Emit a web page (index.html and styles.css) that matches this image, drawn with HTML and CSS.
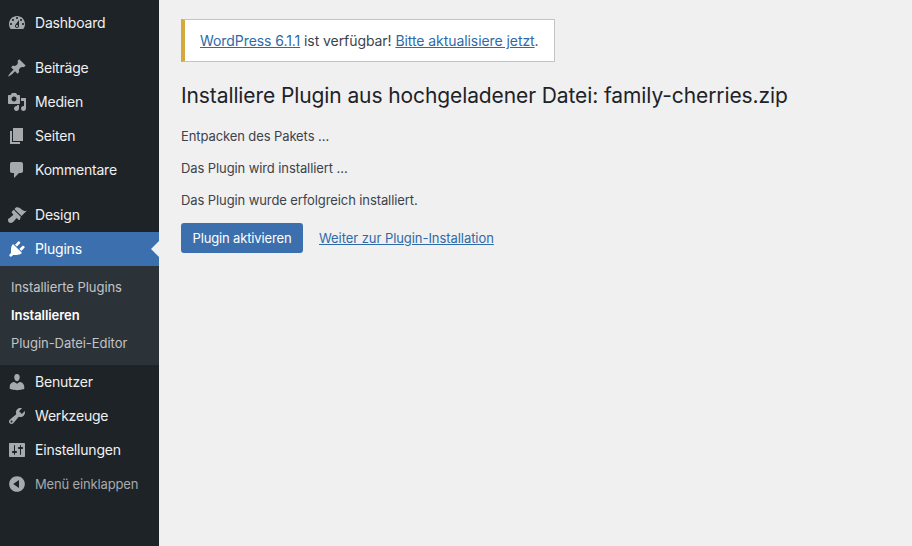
FILE: index.html
```html
<!DOCTYPE html>
<html lang="de">
<head>
  <meta charset="UTF-8" />
  <meta name="viewport" content="width=device-width, initial-scale=1" />
  <title>Plugin installieren</title>
  <link rel="stylesheet" href="styles.css">
</head>
<body>
  <div class="admin">
    <nav class="sidebar">
      <a class="menu-item first" href="#">
        <svg class="menu-icon" viewBox="0 0 20 20"><path d="M3.76 16h12.48c1.1-1.37 1.76-3.11 1.76-5 0-4.42-3.58-8-8-8s-8 3.58-8 8c0 1.89.66 3.63 1.76 5zM10 4c.55 0 1 .45 1 1s-.45 1-1 1-1-.45-1-1 .45-1 1-1zM6 6c.55 0 1 .45 1 1s-.45 1-1 1-1-.45-1-1 .45-1 1-1zm8 0c.55 0 1 .45 1 1s-.45 1-1 1-1-.45-1-1 .45-1 1-1zm-5.37 5.55L12 7v6c0 1.1-.9 2-2 2s-2-.9-2-2c0-.57.24-1.08.63-1.45zM4 10c.55 0 1 .45 1 1s-.45 1-1 1-1-.45-1-1 .45-1 1-1zm12 0c.55 0 1 .45 1 1s-.45 1-1 1-1-.45-1-1 .45-1 1-1zm-5 3c0-.55-.45-1-1-1s-1 .45-1 1 .45 1 1 1 1-.45 1-1z"/></svg>
        Dashboard
      </a>
      <div class="menu-gap"></div>
      <a class="menu-item" href="#">
        <svg class="menu-icon" viewBox="0 0 20 20"><path d="M10.44 3.02l1.82-1.82 6.36 6.35-1.83 1.82c-1.05-.68-2.48-.57-3.41.36l-.75.75c-.92.93-1.04 2.35-.35 3.41l-1.83 1.82-2.41-2.41-2.8 2.79c-.42.42-3.38 2.71-3.8 2.29s1.86-3.39 2.28-3.81l2.79-2.79L4.1 9.36l1.83-1.82c1.05.69 2.48.57 3.4-.36l.75-.75c.93-.92 1.05-2.35.36-3.41z"/></svg>
        Beiträge
      </a>
      <a class="menu-item" href="#">
        <svg class="menu-icon" viewBox="0 0 20 20"><path d="M13 11V4c0-.55-.45-1-1-1h-1.67L9 1H5L3.67 3H2c-.55 0-1 .45-1 1v7c0 .55.45 1 1 1h10c.55 0 1-.45 1-1zM7 4.5c1.38 0 2.5 1.12 2.5 2.5S8.38 9.5 7 9.5 4.5 8.38 4.5 7 5.62 4.5 7 4.5zM14 6h5v10.5c0 1.38-1.12 2.5-2.5 2.5S14 17.88 14 16.5s1.12-2.5 2.5-2.5c.17 0 .34.02.5.05V9h-3V6zm-4 8.05V13h2v3.5c0 1.38-1.12 2.5-2.5 2.5S7 17.88 7 16.5 8.12 14 9.5 14c.17 0 .34.02.5.05z"/></svg>
        Medien
      </a>
      <a class="menu-item" href="#">
        <svg class="menu-icon" viewBox="0 0 20 20"><path d="M6 15V2h10v13H6zm-1 1h8v2H3V5h2v11z"/></svg>
        Seiten
      </a>
      <a class="menu-item" href="#">
        <svg class="menu-icon" viewBox="0 0 20 20"><path d="M5 2h9c1.1 0 2 .9 2 2v7c0 1.1-.9 2-2 2h-2l-5 5v-5H5c-1.1 0-2-.9-2-2V4c0-1.1.9-2 2-2z"/></svg>
        Kommentare
      </a>
      <div class="menu-gap"></div>
      <a class="menu-item" href="#">
        <svg class="menu-icon" viewBox="0 0 20 20"><path d="M14.48 11.06L7.41 3.99l1.5-1.5c.5-.56 2.3-.47 3.51.32 1.21.8 1.43 1.28 2.91 2.1 1.18.64 2.45 1.26 4.45.85zm-.71.71L6.7 4.7 4.93 6.47c-.39.39-.39 1.02 0 1.41l1.06 1.06c.39.39.39 1.03 0 1.42-.6.6-1.43 1.11-2.21 1.69-.35.26-.7.53-1.01.84C1.43 13.23 1 14.12 1 15c0 2 1 3 3 3 .88 0 1.77-.43 2.46-1.13.31-.31.58-.66.84-1.01.58-.78 1.09-1.61 1.69-2.21.39-.39 1.03-.39 1.42 0l1.06 1.06c.39.39 1.02.39 1.41 0z"/></svg>
        Design
      </a>
      <a class="menu-item active" href="#">
        <svg class="menu-icon" viewBox="0 0 20 20"><path d="M13.11 4.36L9.87 7.6 8 5.73l3.24-3.24c.35-.34 1.05-.2 1.56.32.52.51.66 1.21.31 1.55zm-8 1.77l.91-1.12 9.01 9.01-1.19.84c-.71.71-2.63 1.16-3.82 1.16H6.14L4.9 17.26c-.59.59-1.54.59-2.12 0-.59-.58-.59-1.53 0-2.12l1.24-1.24v-3.88c0-1.13.4-3.19 1.09-3.89zm7.26 3.97l3.24-3.24c.34-.35 1.04-.21 1.55.31.52.51.66 1.21.31 1.55l-3.24 3.25z"/></svg>
        Plugins
      </a>
      <ul class="submenu">
        <li><a href="#">Installierte Plugins</a></li>
        <li><a class="current" href="#">Installieren</a></li>
        <li><a href="#">Plugin-Datei-Editor</a></li>
      </ul>
      <a class="menu-item" href="#">
        <svg class="menu-icon" viewBox="0 0 20 20"><path d="M10 9.25c-2.27 0-2.73-3.44-2.73-3.44C7 4.02 7.82 2 9.97 2c2.16 0 2.98 2.02 2.71 3.81 0 0-.41 3.44-2.68 3.44zm0 2.57L12.72 10c2.39 0 4.52 2.33 4.52 4.53v2.49s-3.65 1.13-7.24 1.13c-3.65 0-7.24-1.13-7.24-1.13v-2.49c0-2.25 1.94-4.48 4.47-4.48z"/></svg>
        Benutzer
      </a>
      <a class="menu-item" href="#">
        <svg class="menu-icon" viewBox="0 0 20 20"><path d="M16.68 9.77c-1.34 1.34-3.3 1.67-4.95.99l-5.41 6.52c-.99.99-2.59.99-3.58 0s-.99-2.59 0-3.57l6.52-5.42c-.68-1.65-.35-3.61.99-4.95 1.28-1.28 3.12-1.62 4.72-1.06l-2.89 2.89 2.82 2.82 2.86-2.87c.53 1.58.18 3.39-1.08 4.65zM3.81 16.21c.4.39 1.04.39 1.43 0 .4-.4.4-1.04 0-1.43-.39-.4-1.03-.4-1.43 0-.39.39-.39 1.03 0 1.43z"/></svg>
        Werkzeuge
      </a>
      <a class="menu-item" href="#">
        <svg class="menu-icon" viewBox="0 0 20 20"><path d="M18 16V4c0-.55-.45-1-1-1H3c-.55 0-1 .45-1 1v12c0 .55.45 1 1 1h14c.55 0 1-.45 1-1zM8 11h1c.55 0 1 .45 1 1s-.45 1-1 1H8v1.5c0 .28-.22.5-.5.5s-.5-.22-.5-.5V13H6c-.55 0-1-.45-1-1s.45-1 1-1h1V5.5c0-.28.22-.5.5-.5s.5.22.5.5V11zm5-2h-1c-.55 0-1-.45-1-1s.45-1 1-1h1V5.5c0-.28.22-.5.5-.5s.5.22.5.5V7h1c.55 0 1 .45 1 1s-.45 1-1 1h-1v5.5c0 .28-.22.5-.5.5s-.5-.22-.5-.5V9z"/></svg>
        Einstellungen
      </a>
      <a class="menu-item collapse" href="#">
        <svg class="menu-icon" viewBox="0 0 20 20"><path d="M10 2.16c4.33 0 7.84 3.51 7.84 7.84s-3.51 7.84-7.84 7.84S2.16 14.33 2.16 10 5.71 2.16 10 2.16zm2 11.72V6.12L6.18 9.97z"/></svg>
        Menü einklappen
      </a>
    </nav>
    <main class="content">
      <div class="notice"><a href="#">WordPress 6.1.1</a> ist verfügbar! <a href="#">Bitte aktualisiere jetzt</a>.</div>
      <h1>Installiere Plugin aus hochgeladener Datei: family-cherries.zip</h1>
      <p>Entpacken des Pakets …</p>
      <p>Das Plugin wird installiert …</p>
      <p>Das Plugin wurde erfolgreich installiert.</p>
      <div class="actions">
        <a class="button" href="#">Plugin aktivieren</a>
        <a class="link" href="#">Weiter zur Plugin-Installation</a>
      </div>
    </main>
  </div>
</body>
</html>
```

FILE: styles.css
```css
html, body {
  margin: 0;
  height: 100%;
}
body {
  font-family: Inter, "Noto Sans", "Liberation Sans", sans-serif;
  font-size: 13px;
  line-height: 1.4;
  background: #f0f0f1;
  color: #3c434a;
  overflow: hidden;
}
a {
  color: #2f6aa8;
}
.admin {
  display: flex;
  height: 100%;
}

/* sidebar */
.sidebar {
  width: 159px;
  flex-shrink: 0;
  background: #1d2327;
  padding-top: 6px;
  box-sizing: border-box;
}
.menu-item {
  position: relative;
  display: flex;
  align-items: center;
  gap: 8px;
  height: 34px;
  padding-left: 7px;
  color: #f0f0f1;
  text-decoration: none;
  font-size: 14px;
  letter-spacing: -0.2px;
}
.menu-icon {
  width: 20px;
  height: 20px;
  fill: #a7aaad;
  flex-shrink: 0;
}
.menu-gap {
  height: 11px;
}
.menu-item.active {
  background: #3b6fae;
  color: #fff;
}
.menu-item.active .menu-icon {
  fill: #fff;
}
.menu-item.active::after {
  content: "";
  position: absolute;
  right: 0;
  top: 9px;
  border: 8px solid transparent;
  border-right-color: #f0f0f1;
  border-left-width: 0;
}
.menu-item.collapse {
  color: #a7aaad;
  font-size: 13px;
  letter-spacing: -0.15px;
}
.submenu {
  list-style: none;
  margin: 0;
  padding: 7px 0 8px;
  background: #2c3338;
}
.submenu a {
  display: block;
  height: 28px;
  line-height: 28px;
  padding-left: 11px;
  color: #c3c4c7;
  text-decoration: none;
  letter-spacing: -0.05px;
}
.submenu a.current {
  color: #fff;
  font-weight: 600;
}

/* main column */
.content {
  flex: 1;
  padding: 19px 22px 0;
}
.notice {
  display: inline-block;
  height: 43px;
  line-height: 41px;
  box-sizing: border-box;
  background: #fff;
  border: 1px solid #c3c4c7;
  border-left: 4px solid #d4a93d;
  padding: 0 15px;
  font-size: 14px;
  letter-spacing: -0.07px;
}
h1 {
  margin: 17px 0 0;
  font-size: 21px;
  font-weight: 400;
  line-height: 33px;
  letter-spacing: -0.1px;
  color: #1d2327;
}
p {
  margin: 0;
  height: 32px;
  line-height: 32px;
  letter-spacing: -0.1px;
}
h1 + p {
  margin-top: 8px;
}
.actions {
  display: flex;
  align-items: center;
  gap: 16px;
  margin-top: 7px;
}
.button {
  width: 122px;
  height: 30px;
  line-height: 30px;
  text-align: center;
  border-radius: 3px;
  background: #3b6fae;
  color: #fff;
  text-decoration: none;
  letter-spacing: -0.15px;
}
.link {
  letter-spacing: -0.06px;
}
```
